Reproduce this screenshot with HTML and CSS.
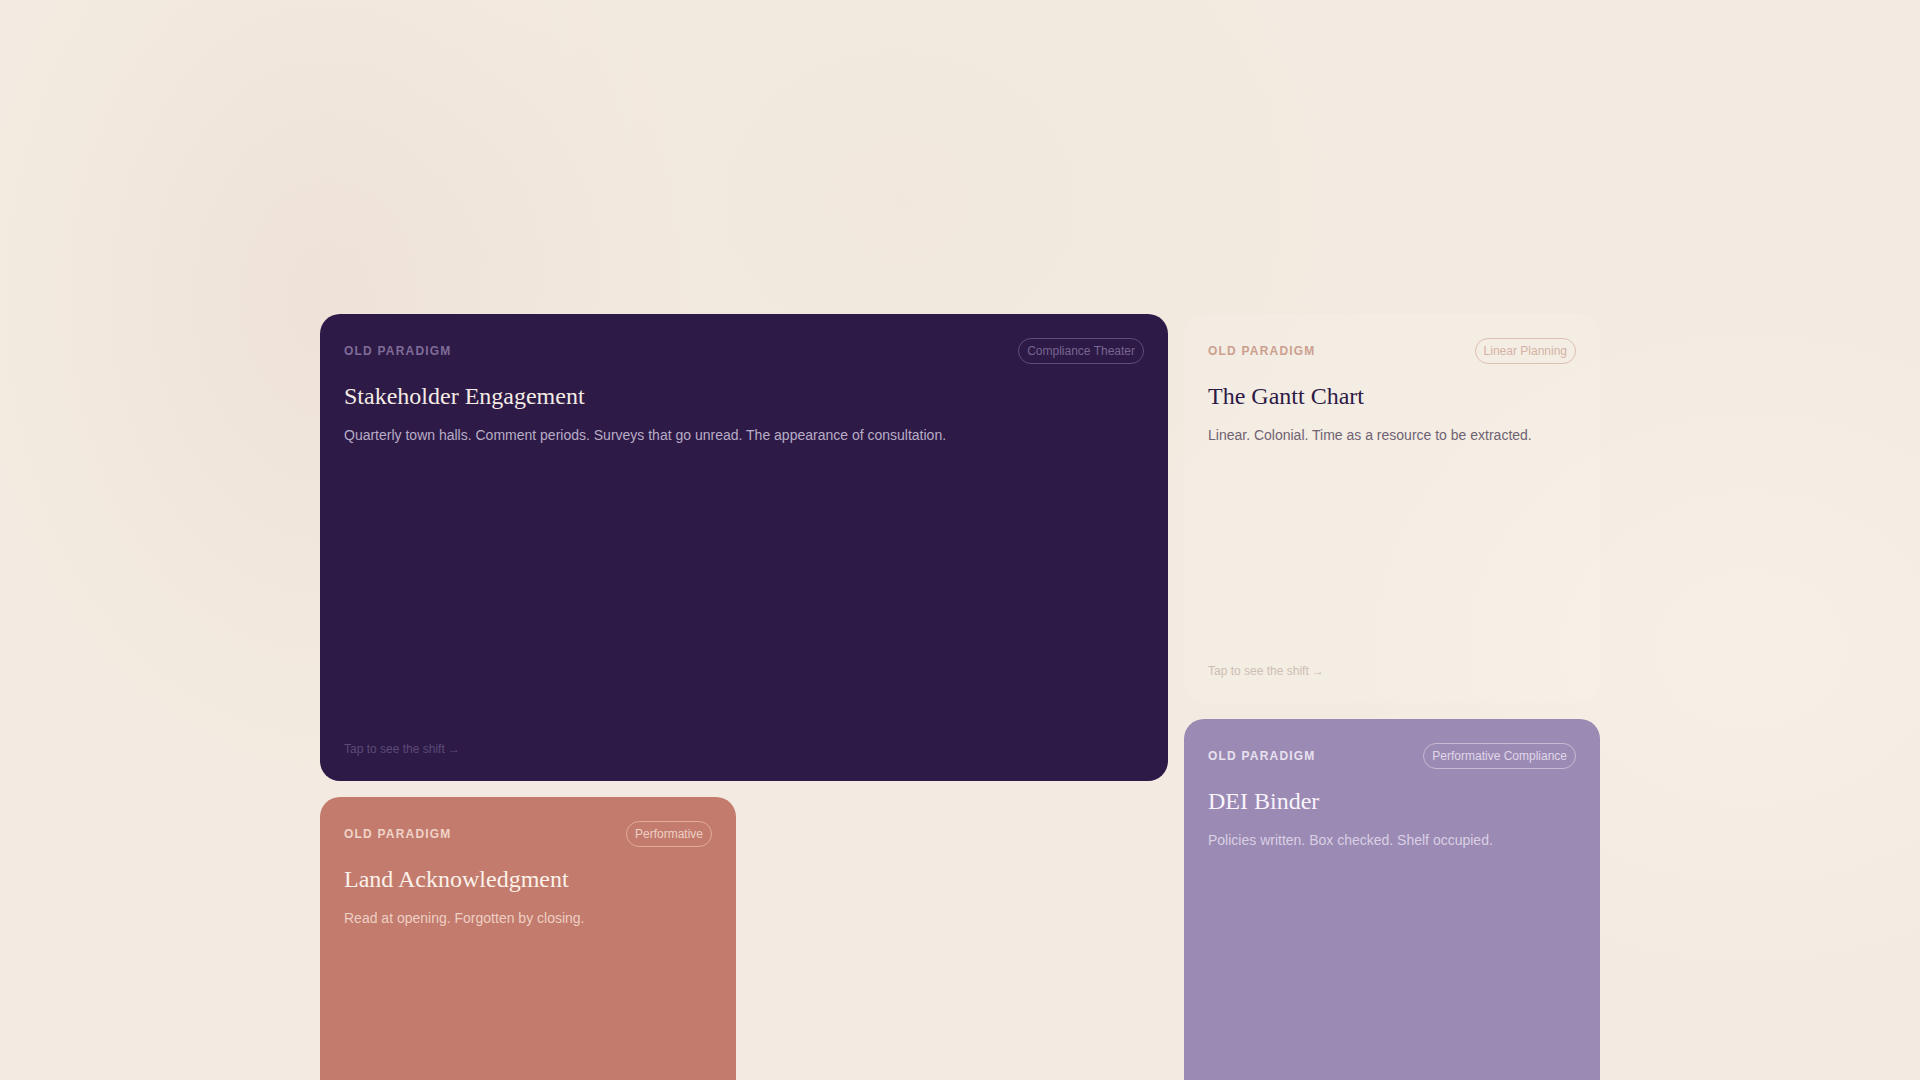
FILE: index.html
```html
<!DOCTYPE html>
<html lang="en">
<head>
<meta charset="utf-8">
<title>Old Paradigm</title>
<link rel="stylesheet" href="styles.css">
</head>
<body>
<main class="grid">
  <div class="col col-wide">
    <article class="card card-dark card-large">
      <header class="card-head">
        <span class="label">OLD PARADIGM</span>
        <span class="badge">Compliance Theater</span>
      </header>
      <h2 class="title">Stakeholder Engagement</h2>
      <p class="desc">Quarterly town halls. Comment periods. Surveys that go unread. The appearance of consultation.</p>
      <p class="hint">Tap to see the shift →</p>
    </article>
    <article class="card card-coral card-tall">
      <header class="card-head">
        <span class="label">OLD PARADIGM</span>
        <span class="badge">Performative</span>
      </header>
      <h2 class="title">Land Acknowledgment</h2>
      <p class="desc">Read at opening. Forgotten by closing.</p>
    </article>
  </div>
  <div class="col">
    <article class="card card-light card-mid">
      <header class="card-head">
        <span class="label">OLD PARADIGM</span>
        <span class="badge">Linear Planning</span>
      </header>
      <h2 class="title">The Gantt Chart</h2>
      <p class="desc">Linear. Colonial. Time as a resource to be extracted.</p>
      <p class="hint">Tap to see the shift →</p>
    </article>
    <article class="card card-lilac card-tall">
      <header class="card-head">
        <span class="label">OLD PARADIGM</span>
        <span class="badge">Performative Compliance</span>
      </header>
      <h2 class="title">DEI Binder</h2>
      <p class="desc">Policies written. Box checked. Shelf occupied.</p>
    </article>
  </div>
</main>
</body>
</html>
```

FILE: styles.css
```css
* { box-sizing: border-box; }

html, body {
  margin: 0;
  padding: 0;
}

body {
  min-height: 100vh;
  font-family: "Liberation Sans", Arial, sans-serif;
  background-color: #f3ebe1;
  background-image:
    radial-gradient(ellipse 520px 700px at 330px 300px, rgba(214, 180, 172, 0.16), rgba(214, 180, 172, 0) 70%),
    radial-gradient(ellipse 700px 600px at 900px 200px, rgba(220, 200, 190, 0.10), rgba(220, 200, 190, 0) 70%),
    radial-gradient(ellipse 600px 500px at 1750px 650px, rgba(250, 244, 236, 0.5), rgba(250, 244, 236, 0) 70%);
  background-attachment: fixed;
}

.grid {
  width: 1280px;
  margin: 0 auto;
  padding-top: 314px;
  display: flex;
  gap: 16px;
  align-items: flex-start;
}

.col {
  width: 416px;
  display: flex;
  flex-direction: column;
  gap: 16px;
}

.col-wide {
  width: 848px;
}

.card {
  border-radius: 20px;
  padding: 24px;
  display: flex;
  flex-direction: column;
}

.card-large { width: 848px; height: 467px; }
.card-mid { height: 389px; }
.card-tall { width: 416px; min-height: 440px; }

.card-head {
  display: flex;
  justify-content: space-between;
  align-items: center;
  height: 26px;
}

.label {
  font-size: 12px;
  font-weight: 700;
  letter-spacing: 0.1em;
  line-height: 16px;
}

.badge {
  font-size: 12px;
  line-height: 24px;
  height: 26px;
  padding: 0 8px;
  border: 1px solid;
  border-radius: 999px;
  white-space: nowrap;
}

.title {
  margin: 17px 0 0;
  font-family: "Liberation Serif", "Times New Roman", serif;
  font-weight: 400;
  font-size: 24px;
  line-height: 30px;
}

.desc {
  margin: 14px 0 0;
  font-size: 14px;
  line-height: 21px;
}

.hint {
  margin: auto 0 0;
  font-size: 12px;
  line-height: 16px;
}

/* dark plum */
.card-dark { background: #2e1a47; }
.card-dark .label { color: #7f6c98; }
.card-dark .badge { color: #76658f; border-color: #5f4c7a; }
.card-dark .title { color: #f4ece4; }
.card-dark .desc { color: #b8adc6; }
.card-dark .hint { color: #5c4a77; }

/* light / cream */
.card-light {
  background: rgba(255, 252, 247, 0.12);
}
.card-light .label { color: #cc9f8f; }
.card-light .badge { color: #d4b2a5; border-color: #dcbfb2; }
.card-light .title { color: #2e1a47; }
.card-light .desc { color: #6f6272; }
.card-light .hint { color: #cdbeb4; }

/* coral */
.card-coral { background: #c27b6c; }
.card-coral .label { color: #f0d3c9; }
.card-coral .badge { color: #efcfc5; border-color: #e3ab9d; }
.card-coral .title { color: #fbf1ea; }
.card-coral .desc { color: #efcfc4; }

/* lilac */
.card-lilac { background: #9b8ab3; }
.card-lilac .label { color: #e8e1f0; }
.card-lilac .badge { color: #e0d7ea; border-color: #c6bbd6; }
.card-lilac .title { color: #f8f3fb; }
.card-lilac .desc { color: #d9d0e5; }
```
